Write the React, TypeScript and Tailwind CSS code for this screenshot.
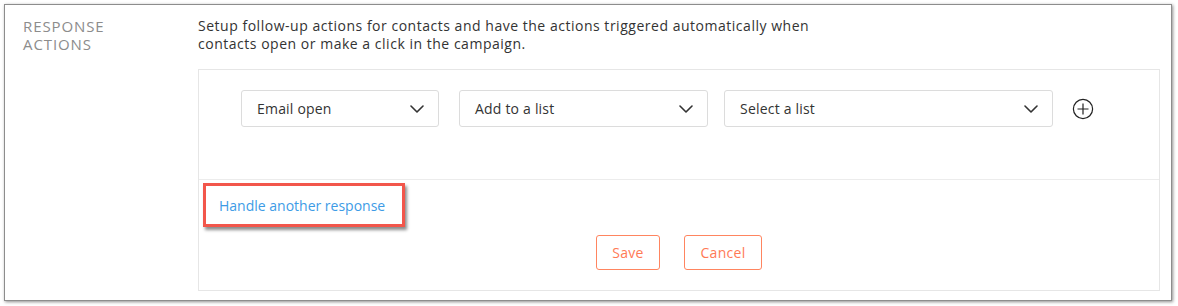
import React from "react";

const font = { fontFamily: '"Open Sans", "Liberation Sans", sans-serif' };

function Chevron() {
	return (
		<svg width="14" height="8" viewBox="0 0 14 8" fill="none">
			<path d="M1 1l6 6 6-6" stroke="#333" strokeWidth="1.6" strokeLinecap="round" strokeLinejoin="round" />
		</svg>
	);
}

type SelectProps = {
	label: string;
	width: string;
};

function Select({ label, width }: SelectProps) {
	return (
		<div className={`${width} h-[37px] shrink-0 flex items-center justify-between border border-[#dcdcdc] rounded-[3px] bg-white pl-[15px] pr-[14px]`}>
			<span className="text-[14px] text-[#333] tracking-[0.2px]">{label}</span>
			<Chevron />
		</div>
	);
}

function App() {
	return (
		<div className="w-[1178px] h-[306px] bg-white pt-[4px] pl-[4px]" style={font}>
			<div className="w-[1168px] h-[297px] bg-white border border-[#8d8d8d] shadow-[1px_1px_3px_rgba(0,0,0,0.45)] flex">
				{/* label column */}
				<div className="w-[193px] shrink-0 pl-[18px] pt-[12px]">
					<p className="text-[15px] leading-[18px] text-[#8c8c8c] tracking-[0.9px]">
						RESPONSE
						<br />
						ACTIONS
					</p>
				</div>

				{/* content column */}
				<div className="flex-1 pt-[12px] pr-[11px]">
					<p className="text-[14px] leading-[18px] text-[#333] tracking-[0.52px] w-[640px]">
						Setup follow-up actions for contacts and have the actions triggered automatically when contacts open or make a click in the campaign.
					</p>

					<div className="mt-[16px] h-[222px] border border-[#e6e6e6] flex flex-col">
						<div className="h-[110px] border-b border-[#ececec] pt-[20px] pl-[42px] flex items-start">
							<Select label="Email open" width="w-[198px]" />
							<div className="w-[20px]" />
							<Select label="Add to a list" width="w-[249px]" />
							<div className="w-[16px]" />
							<Select label="Select a list" width="w-[329px]" />
							<div className="ml-[19px] mt-[8px]">
								<svg width="22" height="22" viewBox="0 0 22 22" fill="none">
									<circle cx="11" cy="11" r="9.6" stroke="#222" strokeWidth="1.2" />
									<path d="M11 5.5v11M5.5 11h11" stroke="#222" strokeWidth="1.2" />
								</svg>
							</div>
						</div>

						<div className="pl-[4px] pt-[3px]">
							<div className="w-[202px] h-[44px] border-[3px] border-[#f2564b] shadow-[2px_3px_3px_rgba(0,0,0,0.45)] flex items-center pl-[13px]">
								<a className="text-[14px] text-[#3d9be6] tracking-[0px] cursor-pointer">Handle another response</a>
							</div>
						</div>

						<div className="mt-[8px] flex justify-center gap-[24px]">
							<button className="w-[64px] h-[35px] border border-[#ff8560] rounded-[3px] text-[14px] text-[#ff7a55] tracking-[0.3px]">Save</button>
							<button className="w-[78px] h-[35px] border border-[#ff8560] rounded-[3px] text-[14px] text-[#ff7a55] tracking-[0.3px]">Cancel</button>
						</div>
					</div>
				</div>
			</div>
		</div>
	);
}

export default App;
